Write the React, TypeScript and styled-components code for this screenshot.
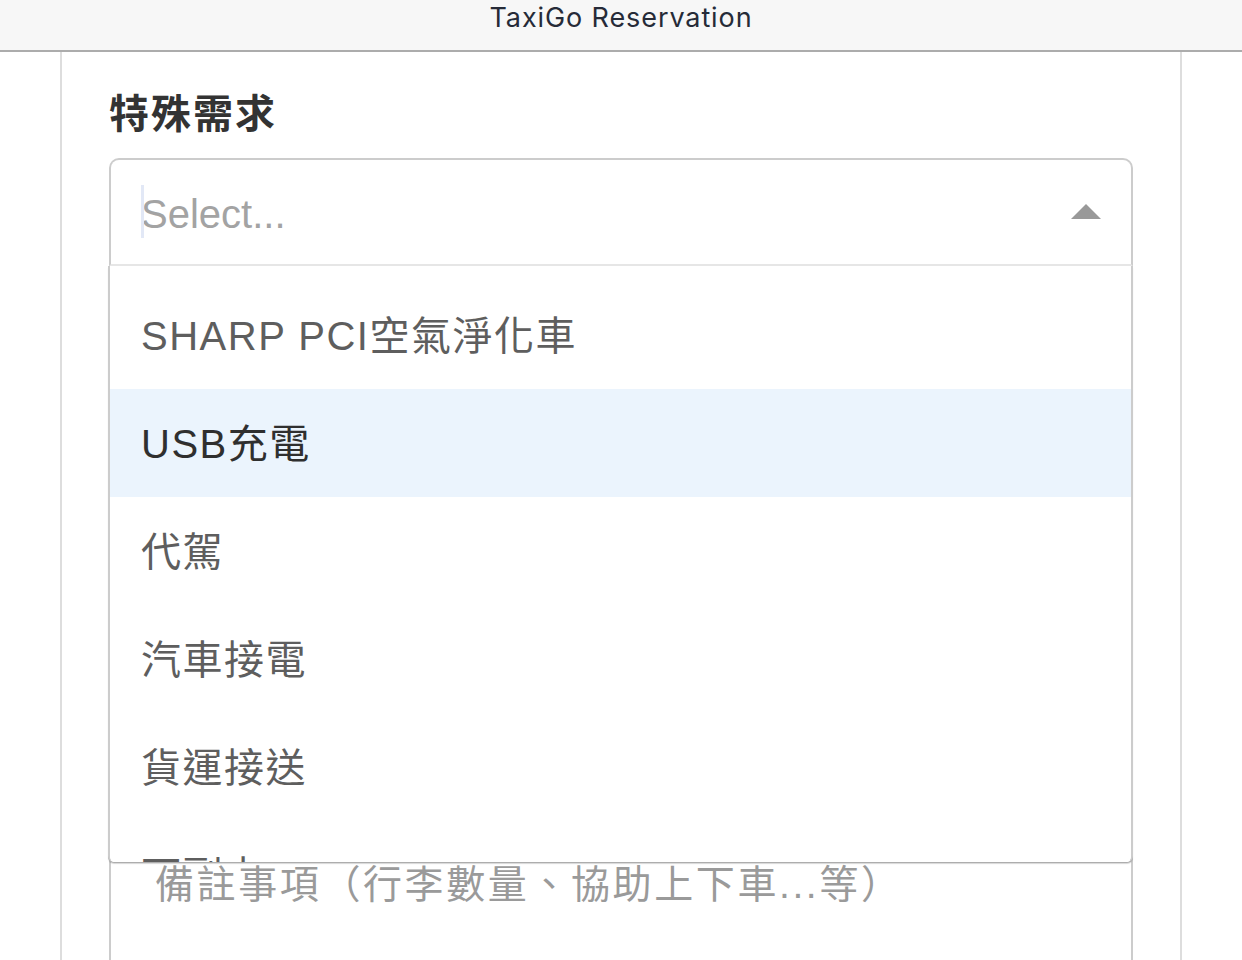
import React from "react";
import styled, { createGlobalStyle } from "styled-components";

const Global = createGlobalStyle`
  html, body { margin: 0; padding: 0; background: #fff; }
  body { font-family: "Liberation Sans", "Noto Sans CJK TC", sans-serif; }
  * { box-sizing: border-box; }
`;

const Page = styled.div`
  display: flex;
  flex-direction: column;
  height: 960px;
  overflow: hidden;
`;

const Header = styled.header`
  flex: none;
  height: 52px;
  background: #f7f7f7;
  border-bottom: 2px solid #acacac;
  display: flex;
  justify-content: center;
  align-items: flex-start;
  padding-top: 1px;
`;

const Title = styled.h1`
  margin: 0;
  font-family: "Inter", "Liberation Sans", sans-serif;
  font-weight: 400;
  font-size: 27px;
  line-height: 34px;
  color: #262b38;
  letter-spacing: 0.9px;
`;

const Panel = styled.main`
  flex: 1;
  margin: 0 60px;
  border-left: 2px solid #dddddd;
  border-right: 2px solid #dddddd;
  padding: 34px 47px 0;
  display: flex;
  flex-direction: column;
`;

const Label = styled.label`
  font-family: "Liberation Sans", "Noto Sans CJK TC", sans-serif;
  font-weight: 700;
  font-size: 40px;
  line-height: 56px;
  letter-spacing: 2px;
  color: #333;
  margin-bottom: 16px;
`;

const SelectWrap = styled.div`
  position: relative;
  z-index: 2;
`;

const Control = styled.div`
  height: 108px;
  border: 2px solid #cccccc;
  border-bottom: 2px solid #e6e6e6;
  border-radius: 10px 10px 0 0;
  background: #fff;
  display: flex;
  align-items: center;
  padding: 0 30px 0 30px;
`;

const Placeholder = styled.div`
  position: relative;
  flex: 1;
  font-size: 40px;
  line-height: 52px;
  color: #a3a3a3;
  padding-top: 4px;
`;

const Caret = styled.span`
  position: absolute;
  left: 0;
  top: 1px;
  width: 3px;
  height: 53px;
  background: #e2e8f6;
`;

const Arrow = styled.svg`
  flex: none;
  width: 30px;
  height: 15px;
  margin-bottom: 2px;
`;

const Menu = styled.div`
  position: absolute;
  top: 100%;
  left: -1px;
  right: 0;
  height: 596px;
  overflow: hidden;
  background: #fff;
  border-left: 2px solid #cccccc;
  border-right: 2px solid #cccccc;
  border-radius: 0 0 6px 6px;
  box-shadow: 0 2px 1px rgba(0, 0, 0, 0.16), 0 1px 0 #cfcfcf;
  padding-top: 15px;
`;

const Option = styled.div<{ $focused?: boolean }>`
  height: 108px;
  display: flex;
  align-items: center;
  padding-left: 31px;
  padding-bottom: 4px;
  font-family: "Liberation Sans", "Noto Sans CJK TC", sans-serif;
  font-size: 40px;
  letter-spacing: 1.5px;
  color: ${(p) => (p.$focused ? "#2f2f2f" : "#5e5e5e")};
  background: ${(p) => (p.$focused ? "#ebf4fd" : "#fff")};
`;

const TextArea = styled.div`
  margin-top: 564px;
  flex: 1;
  border: 2px solid #cccccc;
  border-bottom: none;
  padding: 27px 44px 0;
`;

const AreaPlaceholder = styled.div`
  font-family: "Liberation Sans", "Noto Sans CJK TC", sans-serif;
  font-size: 39px;
  line-height: 52px;
  letter-spacing: 2.6px;
  color: #9a9a9a;
`;

const options = [
  "SHARP PCI空氣淨化車",
  "USB充電",
  "代駕",
  "汽車接電",
  "貨運接送",
  "可副卡",
];

export default function App() {
  return (
    <>
      <Global />
      <Page>
        <Header>
          <Title>TaxiGo Reservation</Title>
        </Header>
        <Panel>
          <Label>特殊需求</Label>
          <SelectWrap>
            <Control>
              <Placeholder>
                <Caret />
                Select...
              </Placeholder>
              <Arrow viewBox="0 0 30 15">
                <polygon points="0,15 15,0 30,15" fill="#999" />
              </Arrow>
            </Control>
            <Menu>
              {options.map((o, i) => (
                <Option key={o} $focused={i === 1}>
                  {o}
                </Option>
              ))}
            </Menu>
          </SelectWrap>
          <TextArea>
            <AreaPlaceholder>備註事項（行李數量、協助上下車...等）</AreaPlaceholder>
          </TextArea>
        </Panel>
      </Page>
    </>
  );
}
